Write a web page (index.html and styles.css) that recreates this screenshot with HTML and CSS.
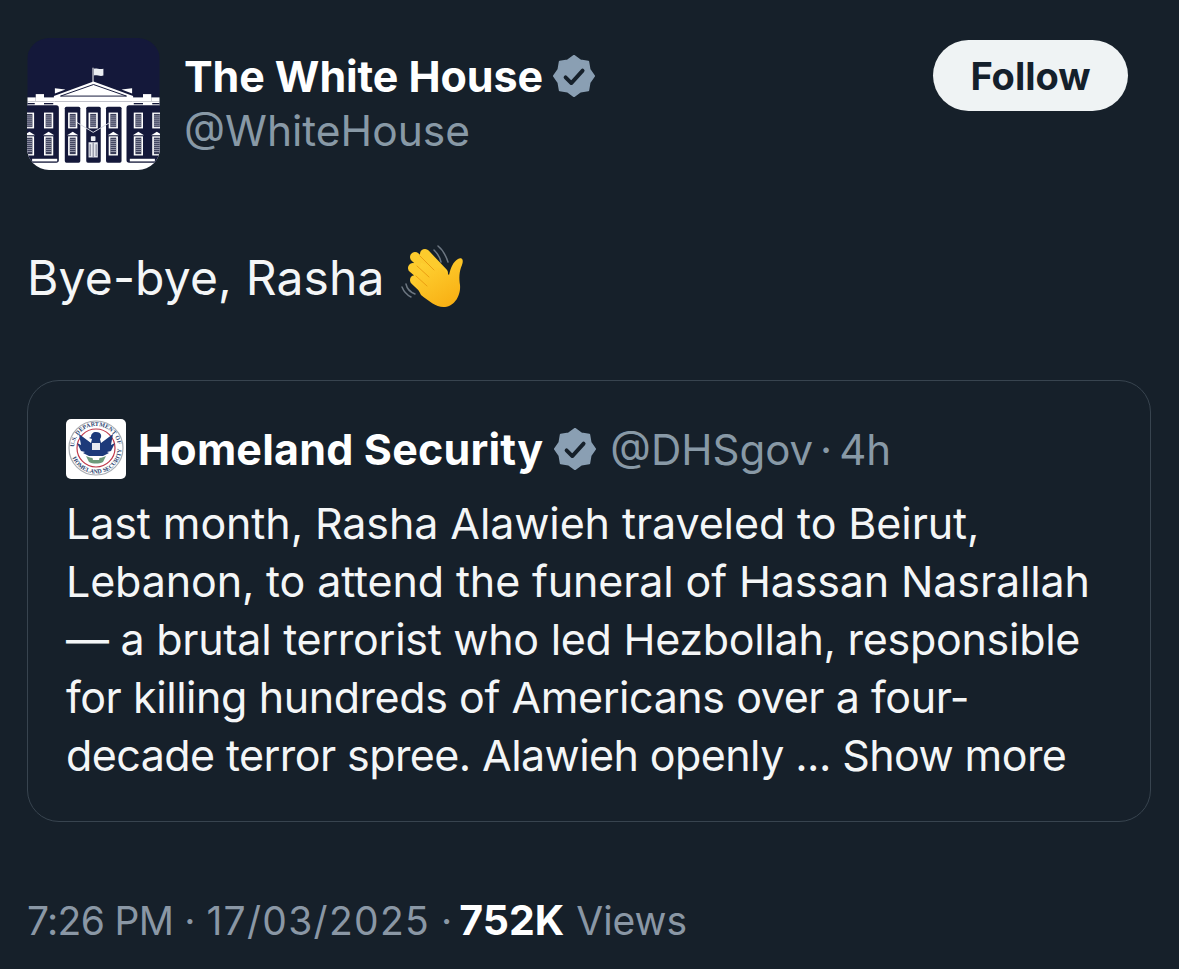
FILE: index.html
```html
<!DOCTYPE html>
<html lang="en">
<head>
<meta charset="utf-8">
<title>The White House on X</title>
<link rel="stylesheet" href="styles.css">
</head>
<body>
<svg class="defs" width="0" height="0" aria-hidden="true">
  <defs>
    <g id="badge">
      <path class="badge-star" d="M22.5 12 20.13 15.37 19.42 19.42 15.37 20.13 12 22.5 8.63 20.13 4.58 19.42 3.87 15.37 1.500 12 3.87 8.63 4.58 4.58 8.63 3.87 12 1.500 15.37 3.87 19.42 4.58 20.13 8.63z"/>
      <path class="badge-check" d="M7.600 12.700l3 3 5.900-6.500"/>
    </g>
    <g id="win">
      <rect x="0" y="0" width="28" height="48" fill="#fff"/>
      <rect x="5" y="4" width="18" height="40" fill="#3a3d59"/>
      <path d="M5 10h18M5 16h18M5 22h18M5 28h18M5 34h18M5 40h18" stroke="#a8aaba" stroke-width="2.5"/>
    </g>
    <g id="winlow">
      <path d="M-3 11 14 0 31 11z" fill="#fff"/>
      <rect x="0" y="14" width="28" height="58" fill="#fff"/>
      <rect x="5" y="18" width="18" height="50" fill="#3a3d59"/>
      <path d="M5 24h18M5 30h18M5 36h18M5 42h18M5 48h18M5 54h18M5 60h18" stroke="#a8aaba" stroke-width="2.5"/>
    </g>
  </defs>
</svg>
<main class="tweet">
  <header class="head">
    <svg class="avatar" viewBox="0 0 400 400" role="img" aria-label="The White House logo">
      <rect width="400" height="400" fill="#14183a"/>
      <rect x="197" y="90" width="3" height="44" fill="#fff"/>
      <path d="M201 93c8-3 16 3 29 0v21c-12 3-20-3-29 0z" fill="#eceef2"/>
      <rect x="0" y="192" width="400" height="208" fill="#fff"/>
      <rect x="25" y="170" width="25" height="22" fill="#fff"/>
      <rect x="350" y="170" width="25" height="22" fill="#fff"/>
      <rect x="0" y="180" width="25" height="12" fill="#fff"/>
      <rect x="50" y="180" width="33" height="12" fill="#fff"/>
      <rect x="317" y="180" width="33" height="12" fill="#fff"/>
      <rect x="375" y="180" width="25" height="12" fill="#fff"/>
      <rect x="0" y="197" width="22" height="4" fill="#14183a"/>
      <rect x="50" y="197" width="28" height="4" fill="#14183a"/>
      <rect x="322" y="197" width="28" height="4" fill="#14183a"/>
      <rect x="378" y="197" width="22" height="4" fill="#14183a"/>
      <path d="M83 152l32 4-32 12zM317 152l-32 4 32 12z" fill="#fff"/>
      <path d="M80 176 200 132 320 176v16H80z" fill="#fff"/>
      <path d="M100 176 200 141 300 176z" fill="#fff" stroke="#14183a" stroke-width="3"/>
      <rect x="-6" y="204" width="101" height="174" rx="8" fill="#14183a"/>
      <rect x="113" y="208" width="47" height="170" rx="5" fill="#14183a"/>
      <rect x="178" y="208" width="44" height="170" rx="5" fill="#14183a"/>
      <rect x="238" y="208" width="47" height="170" rx="5" fill="#14183a"/>
      <rect x="300" y="204" width="106" height="174" rx="8" fill="#14183a"/>
      <use href="#win" x="-8" y="226"/><use href="#win" x="50" y="226"/><use href="#win" x="123" y="226"/><use href="#win" x="185" y="226"/><use href="#win" x="246" y="226"/><use href="#win" x="322" y="226"/><use href="#win" x="378" y="226"/>
      <use href="#winlow" x="-8" y="284"/><use href="#winlow" x="50" y="284"/><use href="#winlow" x="123" y="284"/><use href="#winlow" x="246" y="284"/><use href="#winlow" x="322" y="284"/><use href="#winlow" x="378" y="284"/>
      <path d="M150 256 199 286 250 256" fill="none" stroke="#d5d7e0" stroke-width="3"/>
      <rect x="185" y="316" width="28" height="46" fill="#e6e8ef"/>
      <path d="M199 317v44M190 322v36M208 322v36" stroke="#3a3d59" stroke-width="2"/>
      <rect x="192" y="298" width="14" height="14" rx="2" fill="#eceef2"/>
      <rect x="14" y="366" width="76" height="8" fill="#fff"/>
      <rect x="310" y="366" width="76" height="8" fill="#fff"/>
    </svg>
    <div class="identity">
      <div class="name-row">
        <span class="name">The White House</span>
        <svg class="badge" viewBox="0 0 24 24" aria-label="Verified"><use href="#badge"/></svg>
      </div>
      <div class="handle">@WhiteHouse</div>
    </div>
    <button class="follow" type="button">Follow</button>
  </header>

  <p class="body-text">Bye-bye, Rasha
    <svg class="wave" viewBox="0 0 90 80" role="img" aria-label="waving hand">
      <defs>
        <linearGradient id="hand" x1="0.2" y1="0" x2="0.8" y2="1">
          <stop offset="0" stop-color="#ffd233"/>
          <stop offset="1" stop-color="#f8ae12"/>
        </linearGradient>
      </defs>
      <path d="M43 15c3 3 6 7 7 12M47 11c5 4 8 10 10 16" fill="none" stroke="#6d7782" stroke-width="1.5" stroke-linecap="round"/>
      <path d="M11 52c2 5 5 8 9 10M15 49c1 5 4 8 9 10" fill="none" stroke="#6d7782" stroke-width="1.5" stroke-linecap="round"/>
      <path d="M24 22 46 42M34 19 52 38M22 33 42 50M24 45 40 60" fill="none" stroke="#fdcb2d" stroke-width="10" stroke-linecap="round"/>
      <path d="M30 28 52 34 58 40C60 32 62 27 67 24 71 22 73 25 71 30 68 37 68 43 69 50 70 60 64 71 54 72 46 73 38 66 30 60L24 48z" fill="url(#hand)"/>
      <path d="M29 21 43 35M26 31 38 42M25 41 36 51" fill="none" stroke="#eb9f12" stroke-width="1" stroke-linecap="round"/>
    </svg>
  </p>

  <article class="quote">
    <div class="quote-head">
      <svg class="dhs" viewBox="0 0 60 60" role="img" aria-label="Department of Homeland Security seal">
        <rect width="60" height="60" rx="5" fill="#fff"/>
        <circle cx="30" cy="29" r="27" fill="#fff" stroke="#a9adb3" stroke-width="1.2"/>
        <circle cx="30" cy="29" r="19" fill="#fff" stroke="#c0394a" stroke-width="1.2"/>
        <defs>
          <path id="arcTop" d="M8 29a22 22 0 0 1 44 0"/>
          <path id="arcBot" d="M4.500 29a25.500 25.500 0 0 0 51 0"/>
        </defs>
        <text class="seal-text"><textPath href="#arcTop" startOffset="1">U.S. DEPARTMENT OF</textPath></text>
        <text class="seal-text"><textPath href="#arcBot" startOffset="10">HOMELAND SECURITY</textPath></text>
        <path d="M30 13c-3 0-5 2-5 5l-2 1 3 1-1 4-12-9 2 11-4-2 4 8 4 1-2 1 6 3h14l6-3-2-1 4-1 4-8-4 2 2-11-12 9-1-4c2-2 2-7-4-7z" fill="#1d3a7a"/>
        <rect x="26" y="24" width="8" height="7" fill="#e6e8ef"/>
        <path d="M20 37c6 3 14 3 20 0l-3 6c-4 2-10 2-14 0z" fill="#6f9a7b"/>
        <path d="M26 37h8l-1 4h-6z" fill="#fff"/>
      </svg>
      <span class="quote-name">Homeland Security</span>
      <svg class="badge badge-small" viewBox="0 0 24 24" aria-label="Verified"><use href="#badge"/></svg>
      <span class="quote-meta">@DHSgov<span class="dot-tight">·</span>4h</span>
    </div>
    <p class="quote-text"><span class="line">Last month, Rasha Alawieh traveled to Beirut,</span><span class="line line-2">Lebanon, to attend the funeral of Hassan Nasrallah</span><span class="line line-3">— a brutal terrorist who led Hezbollah, responsible</span><span class="line line-4">for killing hundreds of Americans over a four-</span><span class="line line-5">decade terror spree. Alawieh openly ... Show more</span></p>
  </article>

  <footer class="foot"><span class="time">7:26 PM</span><span class="dot">·</span><span class="date">17/03/2025</span><span class="dot">·</span><strong class="views">752K</strong> <span class="views-label">Views</span></footer>
</main>
</body>
</html>
```
FILE: styles.css
```css
* { box-sizing: border-box; }
html, body { margin: 0; padding: 0; }
body {
  width: 1179px;
  height: 969px;
  overflow: hidden;
  background: #16202a;
  color: #f4f6f7;
  font-family: Inter, "Liberation Sans", sans-serif;
}
.defs { position: absolute; }
.tweet { padding: 38px 28px 0 27px; }

.head { display: flex; align-items: flex-start; padding-right: 23px; }
.avatar { width: 133px; height: 132px; border-radius: 22px; flex: none; display: block; }
.identity { margin-left: 24px; padding-top: 9px; flex: 1; }
.name-row { display: flex; align-items: center; gap: 8px; height: 58px; }
.name { font-size: 43px; font-weight: 700; letter-spacing: -0.1px; color: #fff; line-height: 58px; }
.badge { width: 46px; height: 46px; flex: none; }
.badge-star { fill: #8a9fb3; stroke: #8a9fb3; stroke-width: 1; stroke-linejoin: round; }
.badge-check { fill: none; stroke: #16202a; stroke-width: 2; stroke-linecap: round; stroke-linejoin: round; }
.handle { font-size: 42.5px; color: #8899a6; line-height: 50px; margin-top: 1px; }
.follow {
  width: 195px; height: 71px; margin: 2px 0 0;
  border: 0; border-radius: 36px;
  background: #eff3f4; color: #14202b;
  font: 700 38px Inter, "Liberation Sans", sans-serif;
}

.body-text {
  margin: 76px 0 0;
  font-size: 48px; line-height: 64px; letter-spacing: 0.15px;
  display: flex; align-items: center;
  color: #f4f6f7;
}
.wave { width: 90px; height: 80px; flex: none; margin: -11px 0 -5px 6px; }

.quote {
  width: 1124px; height: 442px; margin-top: 70px;
  border: 1px solid #38444f; border-radius: 32px;
  padding: 38px 38px 0;
}
.quote-head { display: flex; align-items: center; height: 60px; }
.dhs { width: 60px; height: 60px; flex: none; }
.seal-text { font: 700 6px "Liberation Serif", serif; fill: #2b3f6e; }
.quote-name { margin-left: 12px; font-size: 43px; font-weight: 700; letter-spacing: 0.2px; color: #fff; }
.badge-small { margin-left: 9px; }
.quote-meta { margin-left: 12px; font-size: 42px; color: #8899a6; }
.dot-tight { margin: 0 7px; }
.quote-text {
  margin: 15px 0 0;
  font-size: 43px; line-height: 58px; letter-spacing: -0.1px;
  color: #f4f6f7; white-space: nowrap;
}
.line { display: block; }
.line-2 { letter-spacing: -0.14px; }
.line-3 { letter-spacing: -0.28px; }
.line-4 { letter-spacing: -0.43px; }
.line-5 { letter-spacing: -0.58px; }

.foot { margin-top: 69px; font-size: 39px; line-height: 58px; color: #8a97a5; white-space: nowrap; }
.time { letter-spacing: -0.7px; }
.date { letter-spacing: 1.3px; }
.dot { margin: 0 11px; }
.views { color: #fff; font-weight: 700; font-size: 41px; margin-left: -4px; }
.views-label { margin-left: 1px; }
```
